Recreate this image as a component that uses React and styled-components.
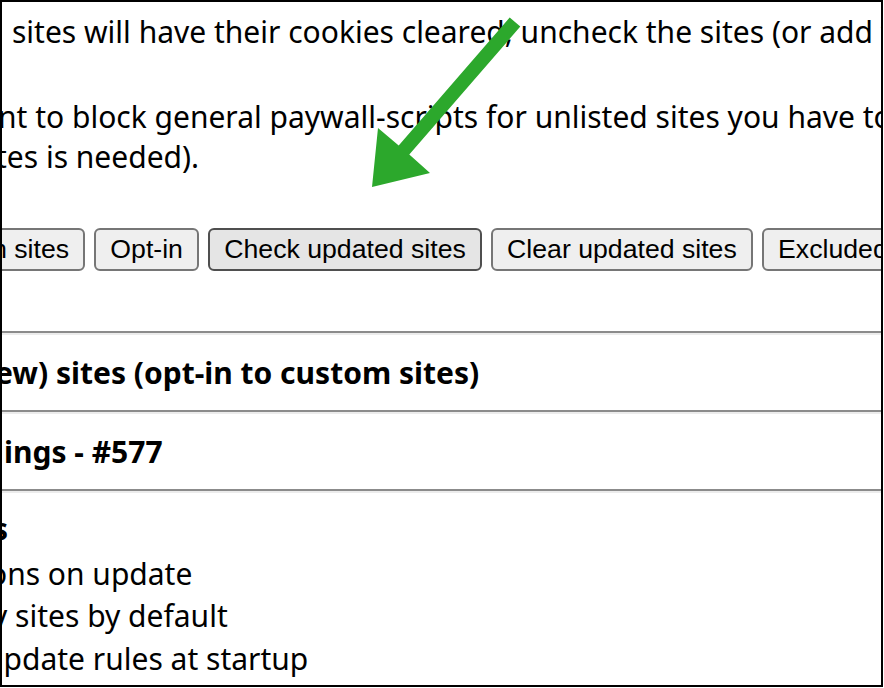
import React from "react";
import styled, { createGlobalStyle } from "styled-components";

const GlobalStyle = createGlobalStyle`
  html, body { margin: 0; padding: 0; background: #ffffff; }
  #root { width: 884px; height: 688px; }
`;

const Frame = styled.main`
  position: relative;
  box-sizing: border-box;
  width: 883px;
  height: 687px;
  border: 2px solid #000000;
  background: #ffffff;
  overflow: hidden;
  color: #000000;
  font-family: "Noto Sans", "Open Sans", sans-serif;
  font-size: 30px;
`;

const Intro = styled.section`
  padding-top: 10px;
`;

const Para = styled.p`
  margin: 0;
  & + & {
    margin-top: 45px;
  }
`;

const Line = styled.div`
  white-space: nowrap;
  line-height: 40px;
  margin-left: ${(p) => p.$shift}px;
`;

const Toolbar = styled.div`
  display: flex;
  gap: 9.3px;
  margin: 51px 0 60px ${(p) => p.$shift}px;
`;

const Button = styled.button`
  flex: none;
  box-sizing: border-box;
  height: 43px;
  padding: 0 14px;
  display: inline-flex;
  align-items: center;
  font-family: "Liberation Sans", Arial, sans-serif;
  font-size: 26.67px;
  color: #000000;
  background: ${(p) => (p.$hover ? "#e5e5e5" : "#efefef")};
  border: 2px solid ${(p) => (p.$hover ? "#4f4f4f" : "#767676")};
  border-radius: 6px;
  white-space: nowrap;
`;

const Rule = styled.hr`
  margin: 0;
  height: 0;
  border: 0;
  border-top: 2px solid #8b8b8b;
  border-bottom: 2px solid #ececec;
`;

const Heading = styled.h2`
  margin: 0 0 0 ${(p) => p.$shift}px;
  padding: 17.6px 0 17.4px;
  font-size: 30px;
  font-weight: 700;
  line-height: 40px;
  white-space: nowrap;
`;

const OptionsBlock = styled.section`
  padding-top: 15.6px;
`;

const OptionsTitle = styled.h3`
  margin: 0 0 0 ${(p) => p.$shift}px;
  font-size: 30px;
  font-weight: 700;
  line-height: 40px;
`;

const OptionList = styled.div`
  margin-top: 4px;
  display: flex;
  flex-direction: column;
`;

const Option = styled.div`
  white-space: nowrap;
  line-height: 42.5px;
  margin-left: ${(p) => p.$shift}px;
`;

const ArrowLayer = styled.svg`
  position: absolute;
  top: -2px;
  left: -2px;
  width: 884px;
  height: 688px;
  pointer-events: none;
`;

const buttons = [
  { label: "Custom sites" },
  { label: "Opt-in" },
  { label: "Check updated sites", hover: true },
  { label: "Clear updated sites" },
  { label: "Excluded sites" },
];

const options = [
  { text: "ons on update", shift: -13 },
  { text: "y sites by default", shift: -10 },
  { text: "update rules at startup", shift: -17 },
];

export default function App() {
  return (
    <>
      <GlobalStyle />
      <Frame>
        <Intro>
          <Para>
            <Line $shift={10}>
              sites will have their cookies cleared, uncheck the sites (or add to
            </Line>
          </Para>
          <Para>
            <Line $shift={-4}>
              nt to block general paywall-scripts for unlisted sites you have to
            </Line>
            <Line $shift={-6}>tes is needed).</Line>
          </Para>
        </Intro>

        <Toolbar $shift={-103}>
          {buttons.map((b) => (
            <Button key={b.label} type="button" $hover={b.hover}>
              {b.label}
            </Button>
          ))}
        </Toolbar>

        <Rule />
        <Heading $shift={-7}>ew) sites (opt-in to custom sites)</Heading>
        <Rule />
        <Heading $shift={2}>ings - #577</Heading>
        <Rule />

        <OptionsBlock>
          <OptionsTitle $shift={-9}>s</OptionsTitle>
          <OptionList>
            {options.map((o) => (
              <Option key={o.text} $shift={o.shift}>
                {o.text}
              </Option>
            ))}
          </OptionList>
        </OptionsBlock>

        <ArrowLayer viewBox="0 0 884 688" aria-hidden="true">
          <polygon
            points="509.7,17.4 520.3,26.6 409.3,154.6 430,173 372,187 378,128 398.7,145.4"
            fill="#2ca82c"
          />
        </ArrowLayer>
      </Frame>
    </>
  );
}
